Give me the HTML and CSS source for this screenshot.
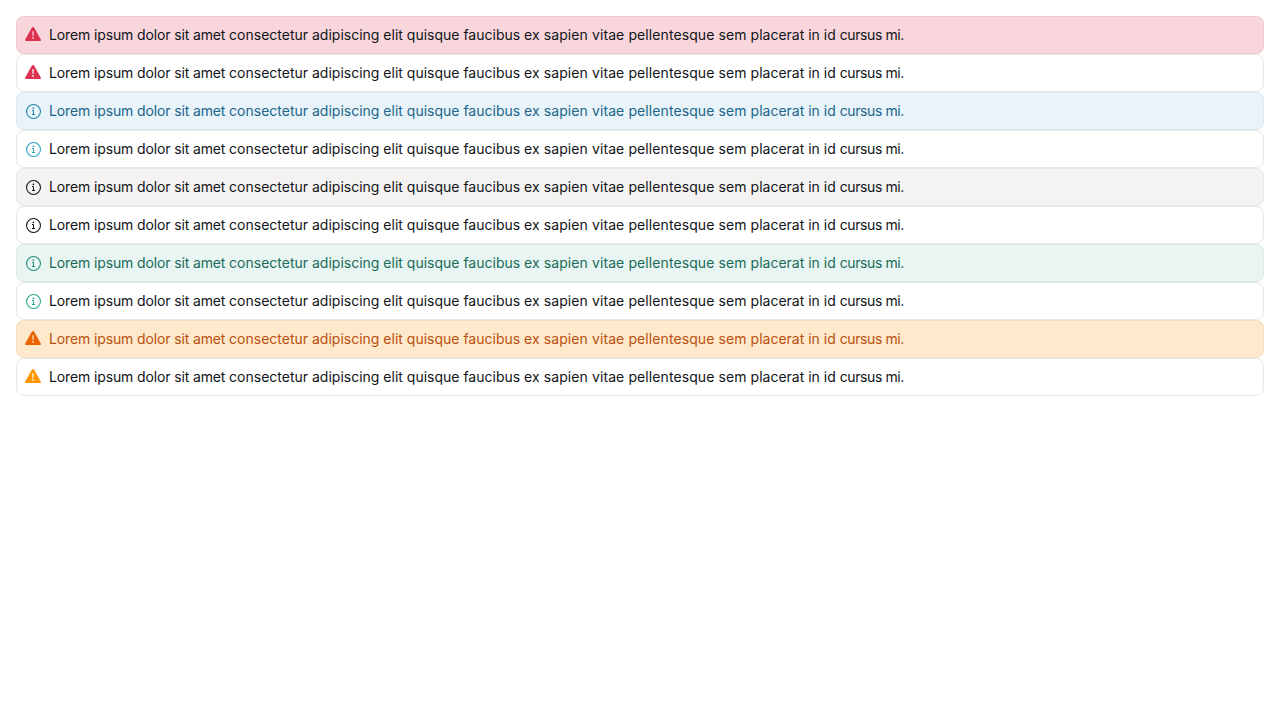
FILE: index.html
```html
<!DOCTYPE html>
<html lang="en">
<head>
<meta charset="utf-8">
<title>Callouts</title>
<link rel="stylesheet" href="styles.css">
</head>
<body>
<svg class="sprite" aria-hidden="true">
<symbol id="warn" viewBox="0 0 16 16"><path fill="currentColor" fill-rule="evenodd" d="M6.8 .8Q8-.8 9.2 .8L15.8 12.6Q16.3 14 15 14H1Q-.3 14 .2 12.6ZM7.3 4.2L7.5 9H8.5L8.7 4.2ZM8 10.1a.85.85 0 1 0 0 1.7 .85.85 0 0 0 0-1.7Z"/></symbol>
<symbol id="info" viewBox="0 0 16 16"><circle cx="8.5" cy="8.5" r="6.95" fill="none" stroke="currentColor" stroke-width="1.1"/><path fill="none" stroke="currentColor" stroke-width="1" d="M7 7.5h1.5v4M7 11.5h3"/><circle cx="8.4" cy="5.3" r=".85" fill="currentColor"/></symbol>
</svg>
<main class="list">
<div class="callout danger filled"><svg class="icon"><use href="#warn"/></svg><p class="message"><span class="tight">Lorem ipsum dolor sit amet </span>consectetur adipiscing elit quisque faucibus <span class="loose">ex sapien vitae pellentesque sem </span>placerat in id <span class="end">cursus mi.</span></p></div>
<div class="callout danger"><svg class="icon"><use href="#warn"/></svg><p class="message"><span class="tight">Lorem ipsum dolor sit amet </span>consectetur adipiscing elit quisque faucibus <span class="loose">ex sapien vitae pellentesque sem </span>placerat in id <span class="end">cursus mi.</span></p></div>
<div class="callout info filled"><svg class="icon"><use href="#info"/></svg><p class="message"><span class="tight">Lorem ipsum dolor sit amet </span>consectetur adipiscing elit quisque faucibus <span class="loose">ex sapien vitae pellentesque sem </span>placerat in id <span class="end">cursus mi.</span></p></div>
<div class="callout info"><svg class="icon"><use href="#info"/></svg><p class="message"><span class="tight">Lorem ipsum dolor sit amet </span>consectetur adipiscing elit quisque faucibus <span class="loose">ex sapien vitae pellentesque sem </span>placerat in id <span class="end">cursus mi.</span></p></div>
<div class="callout neutral filled"><svg class="icon"><use href="#info"/></svg><p class="message"><span class="tight">Lorem ipsum dolor sit amet </span>consectetur adipiscing elit quisque faucibus <span class="loose">ex sapien vitae pellentesque sem </span>placerat in id <span class="end">cursus mi.</span></p></div>
<div class="callout neutral"><svg class="icon"><use href="#info"/></svg><p class="message"><span class="tight">Lorem ipsum dolor sit amet </span>consectetur adipiscing elit quisque faucibus <span class="loose">ex sapien vitae pellentesque sem </span>placerat in id <span class="end">cursus mi.</span></p></div>
<div class="callout success filled"><svg class="icon"><use href="#info"/></svg><p class="message"><span class="tight">Lorem ipsum dolor sit amet </span>consectetur adipiscing elit quisque faucibus <span class="loose">ex sapien vitae pellentesque sem </span>placerat in id <span class="end">cursus mi.</span></p></div>
<div class="callout success"><svg class="icon"><use href="#info"/></svg><p class="message"><span class="tight">Lorem ipsum dolor sit amet </span>consectetur adipiscing elit quisque faucibus <span class="loose">ex sapien vitae pellentesque sem </span>placerat in id <span class="end">cursus mi.</span></p></div>
<div class="callout warning filled"><svg class="icon"><use href="#warn"/></svg><p class="message"><span class="tight">Lorem ipsum dolor sit amet </span>consectetur adipiscing elit quisque faucibus <span class="loose">ex sapien vitae pellentesque sem </span>placerat in id <span class="end">cursus mi.</span></p></div>
<div class="callout warning"><svg class="icon"><use href="#warn"/></svg><p class="message"><span class="tight">Lorem ipsum dolor sit amet </span>consectetur adipiscing elit quisque faucibus <span class="loose">ex sapien vitae pellentesque sem </span>placerat in id <span class="end">cursus mi.</span></p></div>
</main>
</body>
</html>
```
FILE: styles.css
```css
body { margin: 0; padding: 16px; background: #fff; font: 14px/20px Inter, sans-serif; }
.sprite { display: none; }
.callout { display: flex; align-items: center; gap: 8px; box-sizing: border-box; height: 38px; padding: 0 8px; border: 1px solid #e9e7e5; border-radius: 8px; color: #111418; }
.message { margin: 0; white-space: nowrap; }
.tight { letter-spacing: -0.13px; }
.loose { letter-spacing: 0.09px; }
.end { letter-spacing: -0.4px; }
.icon { width: 16px; height: 16px; flex: none; }
.danger .icon { color: #dc3150; }
.info .icon { color: #2f9fc4; }
.success .icon { color: #2aa58a; }
.warning .icon { color: #ff9800; }
.filled { border-color: rgba(60, 50, 30, 0.06); }
.danger.filled { background: #f8d6dc; }
.info.filled { background: #e8f4fa; color: #20658a; }
.info.filled .icon { color: #2384ab; }
.neutral.filled { background: #f5f3f2; }
.success.filled { background: #e8f5f3; color: #1a6b58; }
.success.filled .icon { color: #219173; }
.warning.filled { background: #ffe9cc; color: #b95010; }
.warning.filled .icon { color: #eb6400; }
```
